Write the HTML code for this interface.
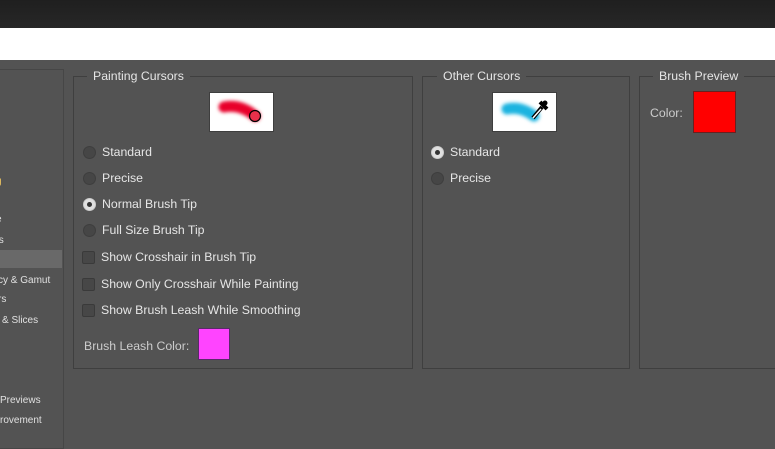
<!DOCTYPE html>
<html><head><style>
*{margin:0;padding:0;box-sizing:border-box}
body{width:775px;height:440px;overflow:hidden;background:#535353;font-family:"Liberation Sans",sans-serif;font-size:12.3px;color:#e6e6e6;position:relative}
.a{position:absolute;white-space:nowrap}
.top{left:0;top:0;width:775px;height:28px;background:linear-gradient(#1f1f1f,#272727)}
.white{left:0;top:28px;width:775px;height:32px;background:#fff}
.side{left:-2px;top:69px;width:66px;height:380px;border:1px solid #464646;border-left:none}
.sel{left:0;top:250px;width:62px;height:18px;background:#696969}
.st{font-size:10px;color:#e0e0e0}
.grp{border:1px solid #3f3f3f}
.leg{background:#535353;padding:0 6px}
.r{width:13px;height:13px;border-radius:50%;background:#464646;border:1px solid #3e3e3e}
.rs{background:#e0e0e0;border-color:#ccc}
.rs::after{content:"";position:absolute;left:3px;top:3px;width:5px;height:5px;border-radius:50%;background:#333}
.c{width:13px;height:13px;background:#474747;border:1px solid #3a3a3a;border-radius:2px}
</style></head><body>
<div class="a top"></div>
<div class="a white"></div>
<div class="a side"></div>
<div class="a sel"></div>
<div class="a st" style="left:-4px;top:176px;color:#e8c060">g</div>
<div class="a st" style="left:-4px;top:214px">e</div>
<div class="a st" style="left:-4px;top:235px">ts</div>
<div class="a st" style="left:-2px;top:275px">cy &amp; Gamut</div>
<div class="a st" style="left:-2px;top:294px">rs</div>
<div class="a st" style="left:2px;top:315px">&amp; Slices</div>
<div class="a st" style="left:0px;top:395px">Previews</div>
<div class="a st" style="left:0px;top:415px">rovement</div>

<svg width="0" height="0" style="position:absolute"><defs><filter id="b" filterUnits="userSpaceOnUse" x="0" y="0" width="65" height="40"><feGaussianBlur stdDeviation="1.8"/></filter></defs></svg>

<div class="a grp" style="left:73px;top:76px;width:340px;height:293px"></div>
<div class="a leg" style="left:87px;top:69px">Painting Cursors</div>
<svg class="a" style="left:209px;top:92px" width="65" height="40"><rect x=".5" y=".5" width="64" height="39" fill="#fff" stroke="#3e3e3e"/><path d="M15 15 Q32 12 46 24" stroke="#e8002a" stroke-width="11" fill="none" stroke-linecap="round" filter="url(#b)"/><circle cx="46" cy="24" r="5.5" fill="#e8304a" stroke="#000" stroke-width="1.2"/></svg>
<div class="a r" style="left:83px;top:146px"></div><div class="a" style="left:102px;top:145px">Standard</div>
<div class="a r" style="left:83px;top:172px"></div><div class="a" style="left:102px;top:171px">Precise</div>
<div class="a r rs" style="left:83px;top:198px"></div><div class="a" style="left:102px;top:197px">Normal Brush Tip</div>
<div class="a r" style="left:83px;top:224px"></div><div class="a" style="left:102px;top:223px">Full Size Brush Tip</div>
<div class="a c" style="left:82px;top:251px"></div><div class="a" style="left:101px;top:250px">Show Crosshair in Brush Tip</div>
<div class="a c" style="left:82px;top:278px"></div><div class="a" style="left:101px;top:277px">Show Only Crosshair While Painting</div>
<div class="a c" style="left:82px;top:304px"></div><div class="a" style="left:101px;top:303px">Show Brush Leash While Smoothing</div>
<div class="a" style="left:84px;top:339px;color:#ccc">Brush Leash Color:</div>
<div class="a" style="left:198px;top:328px;width:32px;height:32px;background:#ff44ff;border:1px solid #5a2a6a"></div>

<div class="a grp" style="left:422px;top:76px;width:208px;height:293px"></div>
<div class="a leg" style="left:437px;top:69px">Other Cursors</div>
<svg class="a" style="left:492px;top:92px" width="65" height="40"><rect x=".5" y=".5" width="64" height="39" fill="#fff" stroke="#3e3e3e"/><path d="M15 17 Q29 14 42 24" stroke="#1ab4e0" stroke-width="11" fill="none" stroke-linecap="round" filter="url(#b)"/><path d="M41 26 L50 15" stroke="#000" stroke-width="4"/><path d="M41 26 L49 17" stroke="#fff" stroke-width="1.5"/><path d="M48 10 L55 17" stroke="#000" stroke-width="4"/><circle cx="53" cy="11" r="2.5" fill="#000"/></svg>
<div class="a r rs" style="left:431px;top:146px"></div><div class="a" style="left:450px;top:145px">Standard</div>
<div class="a r" style="left:431px;top:172px"></div><div class="a" style="left:450px;top:171px">Precise</div>

<div class="a grp" style="left:639px;top:76px;width:150px;height:293px"></div>
<div class="a leg" style="left:653px;top:69px">Brush Preview</div>
<div class="a" style="left:650px;top:106px;color:#ccc">Color:</div>
<div class="a" style="left:693px;top:91px;width:43px;height:42px;background:#ff0000;border:1px solid #6a2020"></div>
</body></html>
